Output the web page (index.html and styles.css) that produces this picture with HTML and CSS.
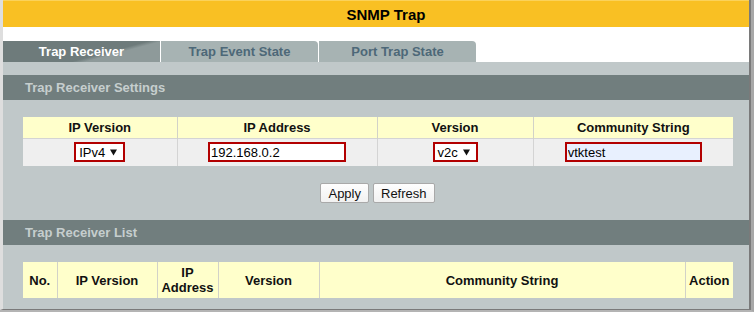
FILE: index.html
```html
<!DOCTYPE html>
<html>
<head>
<meta charset="utf-8">
<link rel="stylesheet" href="styles.css">
</head>
<body>
<div class="screen">
  <div class="frame">
    <div class="title">SNMP Trap</div>
    <div class="tabs">
      <div class="tab active">Trap Receiver</div>
      <div class="tab">Trap Event State</div>
      <div class="tab">Port Trap State</div>
    </div>
    <div class="content">
      <div class="section-head">Trap Receiver Settings</div>
      <table class="grid settings">
        <colgroup><col class="c154"><col class="c200"><col class="c156"><col class="c200"></colgroup>
        <tr class="hrow"><th>IP Version</th><th>IP Address</th><th>Version</th><th>Community String</th></tr>
        <tr class="drow">
          <td><span class="select w51">IPv4<svg width="7" height="7" viewBox="0 0 7 7"><polygon points="0,0.5 7,0.5 3.5,6.5" fill="#111"/></svg></span></td>
          <td><input class="field w138" type="text" value="192.168.0.2"></td>
          <td><span class="select w45">v2c<svg width="7" height="7" viewBox="0 0 7 7"><polygon points="0,0.5 7,0.5 3.5,6.5" fill="#111"/></svg></span></td>
          <td><input class="field w137 autofill" type="text" value="vtktest"></td>
        </tr>
      </table>
      <div class="buttons">
        <button class="btn">Apply</button>
        <button class="btn">Refresh</button>
      </div>
      <div class="section-head">Trap Receiver List</div>
      <table class="grid list">
        <colgroup><col class="c34"><col class="c100"><col class="c61"><col class="c101"><col class="c366"><col class="c48"></colgroup>
        <tr class="lrow"><th>No.</th><th>IP Version</th><th>IP<br>Address</th><th>Version</th><th>Community String</th><th>Action</th></tr>
      </table>
    </div>
  </div>
</div>
</body>
</html>
```

FILE: styles.css
```css
* { box-sizing: border-box; }
html, body { margin: 0; padding: 0; background: #fff; }
body { font-family: "Liberation Sans", Arial, sans-serif; }

.screen {
  width: 754px;
  height: 312px;
  border-right: 3px solid #a8a8a8;
  border-bottom: 2px solid #b4b4b4;
  overflow: hidden;
}
.frame {
  height: 310px;
  border-left: 3px solid #dedede;
  border-right: 2px solid #7a7a7a;
  border-bottom: 1px solid #7a7a7a;
  display: flex;
  flex-direction: column;
}
.title {
  height: 27px;
  background: #f9c023;
  border-top: 1px solid #fbd25a;
  font-weight: bold;
  font-size: 15px;
  color: #000;
  display: flex;
  align-items: center;
  justify-content: center;
  padding-left: 20px;
}
.tabs {
  margin-top: 14px;
  height: 21px;
  display: flex;
  gap: 1px;
}
.tab {
  width: 157px;
  height: 21px;
  background: #a7b3b3;
  color: #4d6878;
  font-weight: bold;
  font-size: 13px;
  display: flex;
  align-items: center;
  justify-content: center;
  border-radius: 0 4px 0 0;
}
.tab.active {
  background: linear-gradient(165deg, #6e7b7b 0%, #6e7b7b 62%, #8e9a9a 68%, #8e9a9a 100%);
  color: #fff;
  border-radius: 0;
}
.content {
  flex: 1;
  background: #c0c8c9;
  padding-top: 13px;
  display: flex;
  flex-direction: column;
}
.section-head {
  height: 25px;
  background: #717e7e;
  color: #c6cece;
  font-weight: bold;
  font-size: 13px;
  padding-left: 22px;
  display: flex;
  align-items: center;
}
.grid {
  margin-left: 20px;
  width: 710px;
  table-layout: fixed;
  border-collapse: collapse;
  margin-top: 17px;
  font-size: 13px;
  color: #111;
}
.c154 { width: 154px; }
.c200 { width: 200px; }
.c156 { width: 156px; }
.c34 { width: 34px; }
.c100 { width: 100px; }
.c61 { width: 61px; }
.c101 { width: 101px; }
.c366 { width: 366px; }
.c48 { width: 48px; }

.grid th {
  background: #ffffcb;
  font-weight: bold;
  text-align: center;
  padding: 0;
  border-left: 1px solid #d2d2c8;
}
.grid td {
  background: #efefef;
  text-align: center;
  padding: 0;
  border-left: 1px solid #d4d4d4;
  border-top: 1px solid #d4d4d4;
}
.grid th:first-child, .grid td:first-child { border-left: none; }
.hrow { height: 21px; }
.drow { height: 28px; }
.lrow { height: 36px; }
.lrow th { line-height: 15px; }

.select {
  display: inline-flex;
  align-items: center;
  justify-content: space-between;
  height: 20px;
  border: 2px solid #b20000;
  background: #fff;
  padding: 0 6px 0 3px;
  font-size: 13px;
  color: #000;
  vertical-align: middle;
}
.w51 { width: 51px; }
.w45 { width: 45px; }
.field {
  height: 20px;
  border: 2px solid #b20000;
  background: #fff;
  padding: 0 1px;
  font-family: "Liberation Sans", Arial, sans-serif;
  font-size: 13px;
  color: #000;
  vertical-align: middle;
  outline: none;
}
.w138 { width: 138px; }
.w137 { width: 137px; }
.autofill { background: #e8f0fe; }

.buttons {
  margin-top: 17px;
  margin-bottom: 17px;
  display: flex;
  justify-content: center;
  gap: 4px;
  padding-left: 3px;
}
.btn {
  height: 20px;
  padding: 0 7px;
  border: 1px solid #a9a9a9;
  border-radius: 2px;
  background: linear-gradient(#fefefe, #f1f1f1);
  font-family: "Liberation Sans", Arial, sans-serif;
  font-size: 13px;
  color: #111;
}
.list { margin-top: 17px; }
```
